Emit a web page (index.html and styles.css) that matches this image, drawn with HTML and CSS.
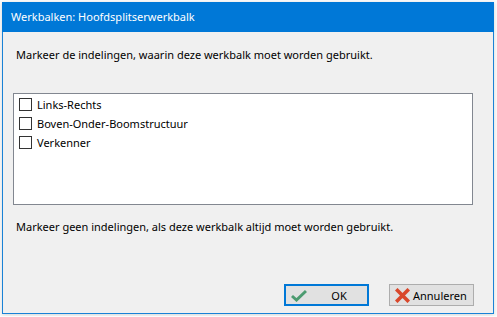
FILE: index.html
```html
<!DOCTYPE html>
<html lang="nl">
<head>
  <meta charset="UTF-8" />
  <title>Werkbalken: Hoofdsplitserwerkbalk</title>
  <link rel="stylesheet" href="styles.css">
</head>
<body>
  <div class="dialog">
    <div class="titlebar">Werkbalken: Hoofdsplitserwerkbalk</div>
    <div class="content">
      <p class="hint">Markeer de indelingen, waarin deze werkbalk moet worden gebruikt.</p>
      <ul class="listbox">
        <li><span class="check"></span>Links-Rechts</li>
        <li><span class="check"></span>Boven-Onder-Boomstructuur</li>
        <li><span class="check"></span>Verkenner</li>
      </ul>
      <p class="hint second">Markeer geen indelingen, als deze werkbalk altijd moet worden gebruikt.</p>
      <div class="buttons">
        <button class="btn default">
          <svg width="16" height="13" viewBox="0 0 16 13"><path d="M1 7 L5.5 11 L15 2" fill="none" stroke="#4c9b70" stroke-width="3"/></svg>
          <span>OK</span>
        </button>
        <button class="btn">
          <svg width="15" height="15" viewBox="0 0 15 15"><path d="M2.5 2.5 L12.5 12.5 M12.5 2.5 L2.5 12.5" stroke="#d9472b" stroke-width="3.6" stroke-linecap="square"/></svg>
          <span>Annuleren</span>
        </button>
      </div>
    </div>
  </div>
</body>
</html>
```

FILE: styles.css
```css
body {
  margin: 0;
  padding: 2px;
  background: #fbfbfb;
  font-family: "Noto Sans", "Open Sans", sans-serif;
  font-size: 11px;
  color: #000;
}
.dialog {
  width: 490px;
  height: 311px;
  border: 1px solid #1a82d6;
  border-top: none;
  background: #f0f0f0;
  display: flex;
  flex-direction: column;
  box-shadow: 0 1px 4px rgba(0, 0, 0, 0.15);
}
.titlebar {
  height: 30px;
  margin: 0 -1px;
  padding-left: 9px;
  background: #0078d7;
  color: #fff;
  line-height: 30px;
  font-size: 11px;
}
.content {
  flex: 1;
  padding: 15px 19px 7px 10px;
  display: flex;
  flex-direction: column;
}
.hint {
  margin: 0 0 0 3px;
  line-height: 16px;
}
.listbox {
  list-style: none;
  margin: 30px 0 0 0;
  padding: 1px 0;
  width: 458px;
  height: 108px;
  border: 1px solid #828790;
  background: #fff;
}
.listbox li {
  height: 19px;
  display: flex;
  align-items: center;
  padding-left: 5px;
}
.check {
  width: 11px;
  height: 11px;
  border: 1px solid #333;
  background: #fff;
  margin-right: 5px;
}
.second {
  margin-top: 14px;
}
.buttons {
  margin-top: auto;
  display: flex;
  justify-content: flex-end;
  gap: 20px;
}
.btn {
  width: 85px;
  height: 22px;
  padding: 0 5px;
  border: 1px solid #adadad;
  background: #e1e1e1;
  font-family: inherit;
  font-size: 11px;
  display: flex;
  align-items: center;
  gap: 3px;
}
.btn.default {
  border: 2px solid #0078d7;
  padding: 0 5px;
}
.btn.default span {
  flex: 1;
  text-align: center;
  padding-left: 6px;
}
```
